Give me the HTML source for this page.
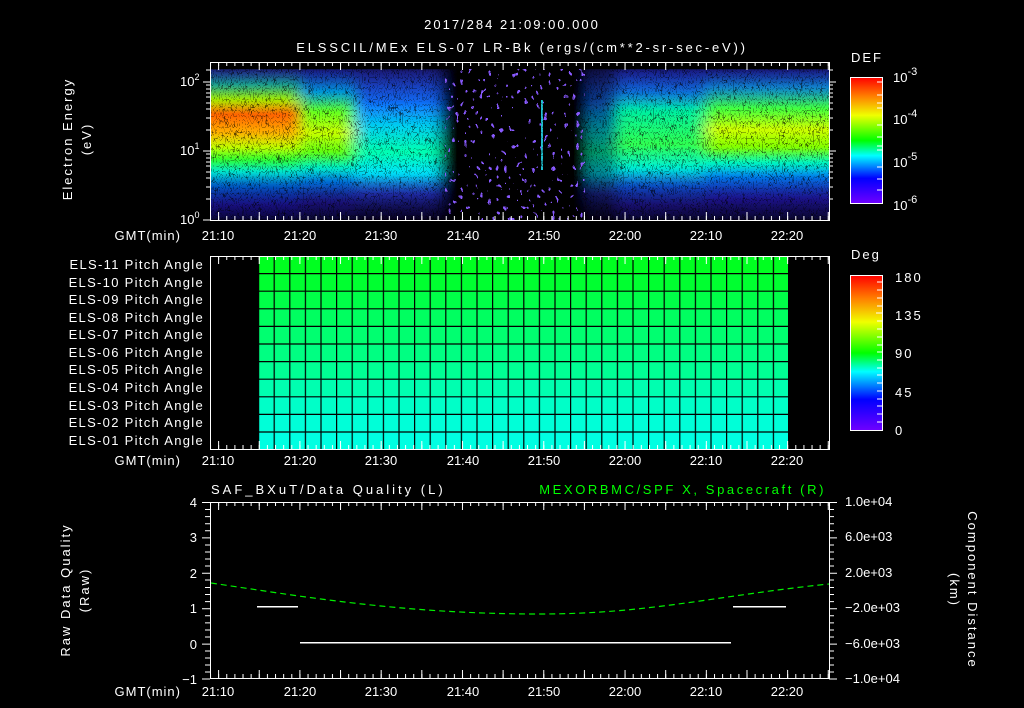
<!DOCTYPE html>
<html><head><meta charset="utf-8"><style>
html,body{margin:0;padding:0;background:#000;width:1024px;height:708px;overflow:hidden}
svg{display:block}
text{font-family:"Liberation Sans",sans-serif;fill:#fff;font-size:13px}
.w{letter-spacing:2px}
</style></head><body>
<svg width="1024" height="708" viewBox="0 0 1024 708" xmlns="http://www.w3.org/2000/svg">
<defs>
<linearGradient id="g1" gradientUnits="userSpaceOnUse" x1="0" y1="69" x2="0" y2="220">
<stop offset="0" stop-color="#3a40ff"/><stop offset=".1" stop-color="#20d0c0"/><stop offset=".2" stop-color="#b0ff00"/><stop offset=".3" stop-color="#ff6000"/><stop offset=".42" stop-color="#ffb000"/><stop offset=".52" stop-color="#c0ff00"/><stop offset=".6" stop-color="#30ff30"/><stop offset=".68" stop-color="#00e8d0"/><stop offset=".78" stop-color="#0070ff"/><stop offset=".9" stop-color="#3020ff"/><stop offset="1" stop-color="#2010c0"/></linearGradient>
<linearGradient id="g2" gradientUnits="userSpaceOnUse" x1="0" y1="69" x2="0" y2="220">
<stop offset="0" stop-color="#3030ff"/><stop offset=".15" stop-color="#00b0ff"/><stop offset=".28" stop-color="#60ff20"/><stop offset=".42" stop-color="#c8ff00"/><stop offset=".55" stop-color="#60ff10"/><stop offset=".65" stop-color="#00f0c0"/><stop offset=".75" stop-color="#0080ff"/><stop offset=".88" stop-color="#3020e0"/><stop offset="1" stop-color="#2010a0"/></linearGradient>
<linearGradient id="g3" gradientUnits="userSpaceOnUse" x1="0" y1="69" x2="0" y2="220">
<stop offset="0" stop-color="#3030e0"/><stop offset=".22" stop-color="#1070ff"/><stop offset=".38" stop-color="#00d0f0"/><stop offset=".55" stop-color="#00ffb0"/><stop offset=".7" stop-color="#00e0ff"/><stop offset=".83" stop-color="#3040ff"/><stop offset="1" stop-color="#180070"/></linearGradient>
<linearGradient id="g5" gradientUnits="userSpaceOnUse" x1="0" y1="69" x2="0" y2="220">
<stop offset="0" stop-color="#3030ff"/><stop offset=".15" stop-color="#1080ff"/><stop offset=".28" stop-color="#00f0a0"/><stop offset=".5" stop-color="#30ff50"/><stop offset=".65" stop-color="#00f0d0"/><stop offset=".78" stop-color="#1060ff"/><stop offset=".9" stop-color="#3020e0"/><stop offset="1" stop-color="#2010a0"/></linearGradient>
<linearGradient id="g6" gradientUnits="userSpaceOnUse" x1="0" y1="69" x2="0" y2="220">
<stop offset="0" stop-color="#3030ff"/><stop offset=".12" stop-color="#10a0ff"/><stop offset=".26" stop-color="#40ff40"/><stop offset=".4" stop-color="#d0ff00"/><stop offset=".52" stop-color="#80ff00"/><stop offset=".62" stop-color="#00f8c0"/><stop offset=".72" stop-color="#0080ff"/><stop offset=".86" stop-color="#3020f0"/><stop offset="1" stop-color="#2010a0"/></linearGradient>
<linearGradient id="cb" x1="0" y1="0" x2="0" y2="1">
<stop offset="0" stop-color="#ff0000"/><stop offset=".15" stop-color="#ff8000"/><stop offset=".3" stop-color="#f0ff00"/><stop offset=".5" stop-color="#00ff00"/><stop offset=".62" stop-color="#00ffff"/><stop offset=".8" stop-color="#0000ff"/><stop offset="1" stop-color="#7000ff"/></linearGradient>
<linearGradient id="fade" gradientUnits="userSpaceOnUse" x1="0" y1="69" x2="0" y2="220">
<stop offset="0" stop-color="#000" stop-opacity=".5"/><stop offset=".12" stop-color="#000" stop-opacity=".2"/><stop offset=".25" stop-color="#000" stop-opacity="0"/><stop offset=".68" stop-color="#000" stop-opacity="0"/><stop offset=".82" stop-color="#000" stop-opacity=".35"/><stop offset="1" stop-color="#000" stop-opacity=".7"/></linearGradient>
<clipPath id="c1"><rect x="211" y="69" width="618" height="151"/></clipPath>
<filter id="hb" x="-5%" y="0" width="110%" height="100%"><feGaussianBlur stdDeviation="7 1"/></filter>
<filter id="spk" x="0" y="0" width="100%" height="100%">
<feTurbulence type="turbulence" baseFrequency="0.35 0.18" numOctaves="1" seed="3"/>
<feColorMatrix type="matrix" values="0 0 0 0 0  0 0 0 0 0  0 0 0 0 0  0 0 0 2.5 0"/>
<feComponentTransfer><feFuncA type="discrete" tableValues="1 0 0 0 0 0 0 0 0 0"/></feComponentTransfer>
</filter>
<filter id="dots" x="0" y="0" width="100%" height="100%">
<feTurbulence type="fractalNoise" baseFrequency="0.25 0.18" numOctaves="1" seed="9"/>
<feColorMatrix type="matrix" values="0 0 0 0 0.25  0 0 0 0 0.1  0 0 0 0 1  0 0 0 2.2 -0.55"/>
<feComponentTransfer><feFuncA type="discrete" tableValues="0 0 0 0 0 0 0 0 0 0 0 0 1"/></feComponentTransfer>
</filter>
<pattern id="tmin" patternUnits="userSpaceOnUse" x="210" y="0" width="8.129" height="708"><rect x="0" y="0" width="1" height="708" fill="#fff"/></pattern>
<pattern id="tmaj" patternUnits="userSpaceOnUse" x="218.1" y="0" width="40.645" height="708"><rect x="0" y="0" width="1" height="708" fill="#fff"/></pattern>
<pattern id="vg" patternUnits="userSpaceOnUse" x="258" y="0" width="15.6" height="708"><rect x="0" y="0" width="1.2" height="708" fill="#000"/></pattern>
</defs>

<text x="512" y="29" text-anchor="middle" font-size="16" class="w">2017/284 21:09:00.000</text>
<text x="522" y="52" text-anchor="middle" font-size="17" style="letter-spacing:2.8px">ELSSCIL/MEx ELS-07 LR-Bk  (ergs/(cm**2-sr-sec-eV))</text>

<g clip-path="url(#c1)">
<g filter="url(#hb)">
<rect x="195" y="69" width="105" height="151" fill="url(#g1)"/>
<rect x="300" y="69" width="55" height="151" fill="url(#g2)"/>
<rect x="355" y="69" width="85" height="151" fill="url(#g3)"/>
<rect x="440" y="69" width="150" height="151" fill="#000"/>
<rect x="590" y="69" width="25" height="151" fill="url(#g3)" opacity=".6"/>
<rect x="615" y="69" width="90" height="151" fill="url(#g5)"/>
<rect x="705" y="69" width="140" height="151" fill="url(#g6)"/>
</g>
<rect x="210" y="69" width="619" height="151" fill="url(#fade)"/>
<rect x="445" y="69" width="140" height="151" filter="url(#dots)"/>
<rect x="541" y="100" width="2" height="70" fill="#20c0d0"/>
<rect x="210" y="69" width="619" height="151" filter="url(#spk)" opacity=".6"/>
</g>
<rect x="210" y="62" width="619" height="4" fill="url(#tmin)"/>
<rect x="210" y="62" width="619" height="8" fill="url(#tmaj)"/>
<rect x="210" y="216" width="619" height="4" fill="url(#tmin)"/>
<rect x="210" y="212" width="619" height="8" fill="url(#tmaj)"/>
<rect x="210.5" y="62.5" width="619" height="158" fill="none" stroke="#fff"/>
<g stroke="#fff">
<path d="M203 220H210M203 151H210M203 82H210M206 199H210M206 187H210M206 178H210M206 172H210M206 166H210M206 162H210M206 158H210M206 154H210M206 130H210M206 118H210M206 109H210M206 103H210M206 97H210M206 93H210M206 89H210M206 85H210M206 70H210"/>
<path d="M829 151H836M829 82H836M829 199H833M829 187H833M829 178H833M829 172H833M829 166H833M829 162H833M829 158H833M829 154H833M829 130H833M829 118H833M829 109H833M829 103H833M829 97H833M829 93H833M829 89H833M829 85H833M829 70H833"/>
</g>
<text x="180" y="224">10<tspan font-size="9" dy="-6">0</tspan></text>
<text x="180" y="155">10<tspan font-size="9" dy="-6">1</tspan></text>
<text x="180" y="86">10<tspan font-size="9" dy="-6">2</tspan></text>
<text transform="translate(72,139) rotate(-90)" text-anchor="middle" font-size="15" class="w">Electron Energy</text>
<text transform="translate(91,139) rotate(-90)" text-anchor="middle" font-size="15" class="w">(eV)</text>
<text x="851" y="62" font-size="16" class="w">DEF</text>
<rect x="850.5" y="77.5" width="32" height="126" fill="url(#cb)" stroke="#fff"/>
<g stroke="#fff"><path d="M877 82H882M877 95H882M877 103H882M877 125H882M877 137H882M877 146H882M877 167H882M877 179H882M877 190H882M877 108H882M877 150H882"/></g>
<text x="893" y="82" font-size="16">10<tspan font-size="11" dy="-7">-3</tspan></text>
<text x="893" y="124" font-size="16">10<tspan font-size="11" dy="-7">-4</tspan></text>
<text x="893" y="167" font-size="16">10<tspan font-size="11" dy="-7">-5</tspan></text>
<text x="893" y="210" font-size="16">10<tspan font-size="11" dy="-7">-6</tspan></text>
<g text-anchor="middle">
<text x="181" y="240" text-anchor="end" font-size="13" style="letter-spacing:1px">GMT(min)</text>
<text x="218" y="240">21:10</text><text x="300" y="240">21:20</text><text x="381" y="240">21:30</text><text x="463" y="240">21:40</text><text x="544" y="240">21:50</text><text x="625" y="240">22:00</text><text x="706" y="240">22:10</text><text x="787" y="240">22:20</text>
</g>

<rect x="258" y="256" width="530" height="17.6" fill="#00ff20"/>
<rect x="258" y="273.6" width="530" height="17.6" fill="#00ff30"/>
<rect x="258" y="291.2" width="530" height="17.6" fill="#00ff48"/>
<rect x="258" y="308.8" width="530" height="17.6" fill="#00ff60"/>
<rect x="258" y="326.4" width="530" height="17.6" fill="#00ff70"/>
<rect x="258" y="344" width="530" height="17.6" fill="#00ff82"/>
<rect x="258" y="361.6" width="530" height="17.6" fill="#00ff94"/>
<rect x="258" y="379.2" width="530" height="17.6" fill="#00ffb0"/>
<rect x="258" y="396.8" width="530" height="17.6" fill="#00ffc8"/>
<rect x="258" y="414.4" width="530" height="17.6" fill="#00ffd8"/>
<rect x="258" y="432" width="530" height="17" fill="#00ffe2"/>
<rect x="258" y="256" width="531" height="193" fill="url(#vg)"/>
<g stroke="#000" stroke-width="1.2"><path d="M258 273.6H788M258 291.2H788M258 308.8H788M258 326.4H788M258 344H788M258 361.6H788M258 379.2H788M258 396.8H788M258 414.4H788M258 432H788"/></g>
<rect x="210" y="256" width="619" height="4" fill="url(#tmin)"/>
<rect x="210" y="256" width="619" height="8" fill="url(#tmaj)"/>
<rect x="210" y="445" width="619" height="4" fill="url(#tmin)"/>
<rect x="210" y="441" width="619" height="8" fill="url(#tmaj)"/>
<rect x="210.5" y="256.5" width="619" height="193" fill="none" stroke="#fff"/>
<g text-anchor="end" style="letter-spacing:1.3px">
<text x="204" y="269">ELS-11 Pitch Angle</text>
<text x="204" y="287">ELS-10 Pitch Angle</text>
<text x="204" y="304">ELS-09 Pitch Angle</text>
<text x="204" y="322">ELS-08 Pitch Angle</text>
<text x="204" y="339">ELS-07 Pitch Angle</text>
<text x="204" y="357">ELS-06 Pitch Angle</text>
<text x="204" y="374">ELS-05 Pitch Angle</text>
<text x="204" y="392">ELS-04 Pitch Angle</text>
<text x="204" y="410">ELS-03 Pitch Angle</text>
<text x="204" y="427">ELS-02 Pitch Angle</text>
<text x="204" y="445">ELS-01 Pitch Angle</text>
</g>
<text x="851" y="259" font-size="16" class="w">Deg</text>
<rect x="850.5" y="275.5" width="32" height="155" fill="url(#cb)" stroke="#fff"/>
<g stroke="#fff"><path d="M877 282H882M877 290H882M877 298H882M877 306H882M877 321H882M877 329H882M877 337H882M877 345H882M877 352H882M877 360H882M877 368H882M877 375H882M877 383H882M877 391H882M877 399H882M877 406H882M877 414H882M877 422H882M876 313H882"/></g>
<text x="895" y="282" font-size="17" class="w">180</text>
<text x="895" y="320" font-size="17" class="w">135</text>
<text x="895" y="358" font-size="17" class="w">90</text>
<text x="895" y="397" font-size="17" class="w">45</text>
<text x="895" y="435" font-size="17">0</text>
<g text-anchor="middle">
<text x="181" y="465" text-anchor="end" font-size="13" style="letter-spacing:1px">GMT(min)</text>
<text x="218" y="465">21:10</text><text x="300" y="465">21:20</text><text x="381" y="465">21:30</text><text x="463" y="465">21:40</text><text x="544" y="465">21:50</text><text x="625" y="465">22:00</text><text x="706" y="465">22:10</text><text x="787" y="465">22:20</text>
</g>

<text x="211" y="494" font-size="16" style="letter-spacing:3px">SAF_BXuT/Data Quality (L)</text>
<text x="826" y="494" font-size="16" text-anchor="end" style="fill:#00ff00;letter-spacing:2.6px">MEXORBMC/SPF X, Spacecraft (R)</text>
<rect x="210" y="502" width="619" height="4" fill="url(#tmin)"/>
<rect x="210" y="502" width="619" height="8" fill="url(#tmaj)"/>
<rect x="210" y="674" width="619" height="4" fill="url(#tmin)"/>
<rect x="210" y="670" width="619" height="8" fill="url(#tmaj)"/>
<rect x="210.5" y="502.5" width="619" height="176" fill="none" stroke="#fff"/>
<g stroke="#fff">
<path d="M202 502.5H210M202 537.9H210M202 573.3H210M202 608.7H210M202 644.1H210M202 679H210"/>
<path d="M205 509.5H210M205 516.6H210M205 523.7H210M205 530.8H210M205 545H210M205 552H210M205 559H210M205 566H210M205 580H210M205 587.5H210M205 594.5H210M205 601.6H210M205 615.8H210M205 622.9H210M205 630H210M205 637H210M205 651H210M205 658H210M205 665H210M205 672H210"/>
<path d="M829 502.5H837M829 537.9H837M829 573.3H837M829 608.7H837M829 644.1H837M829 679H837"/>
<path d="M829 509.5H834M829 516.6H834M829 523.7H834M829 530.8H834M829 545H834M829 552H834M829 559H834M829 566H834M829 580H834M829 587.5H834M829 594.5H834M829 601.6H834M829 615.8H834M829 622.9H834M829 630H834M829 637H834M829 651H834M829 658H834M829 665H834M829 672H834"/>
</g>
<g text-anchor="end" font-size="14">
<text x="197" y="507">4</text><text x="197" y="542">3</text><text x="197" y="578">2</text><text x="197" y="613">1</text><text x="197" y="649">0</text><text x="197" y="684">−1</text>
</g>
<g font-size="12">
<text x="845" y="506">1.0e+04</text><text x="845" y="541">6.0e+03</text><text x="845" y="577">2.0e+03</text><text x="845" y="612">−2.0e+03</text><text x="845" y="648">−6.0e+03</text><text x="845" y="683">−1.0e+04</text>
</g>
<path d="M211 583 C 300 596, 400 614, 540 614 C 650 614, 720 595, 829 584" fill="none" stroke="#00ee00" stroke-width="1.2" stroke-dasharray="6 4"/>
<g fill="#fff" shape-rendering="crispEdges">
<rect x="257" y="606" width="41" height="1.5"/><rect x="300" y="642" width="431" height="1.5"/><rect x="733" y="606" width="53" height="1.5"/>
</g>
<text transform="translate(70,590) rotate(-90)" text-anchor="middle" font-size="15" class="w">Raw Data Quality</text>
<text transform="translate(89,590) rotate(-90)" text-anchor="middle" font-size="15" class="w">(Raw)</text>
<text transform="translate(968,590) rotate(90)" text-anchor="middle" font-size="15" class="w">Component Distance</text>
<text transform="translate(950,590) rotate(90)" text-anchor="middle" font-size="15" class="w">(km)</text>
<g text-anchor="middle">
<text x="181" y="696" text-anchor="end" font-size="13" style="letter-spacing:1px">GMT(min)</text>
<text x="218" y="696">21:10</text><text x="300" y="696">21:20</text><text x="381" y="696">21:30</text><text x="463" y="696">21:40</text><text x="544" y="696">21:50</text><text x="625" y="696">22:00</text><text x="706" y="696">22:10</text><text x="787" y="696">22:20</text>
</g>
</svg>
</body></html>
